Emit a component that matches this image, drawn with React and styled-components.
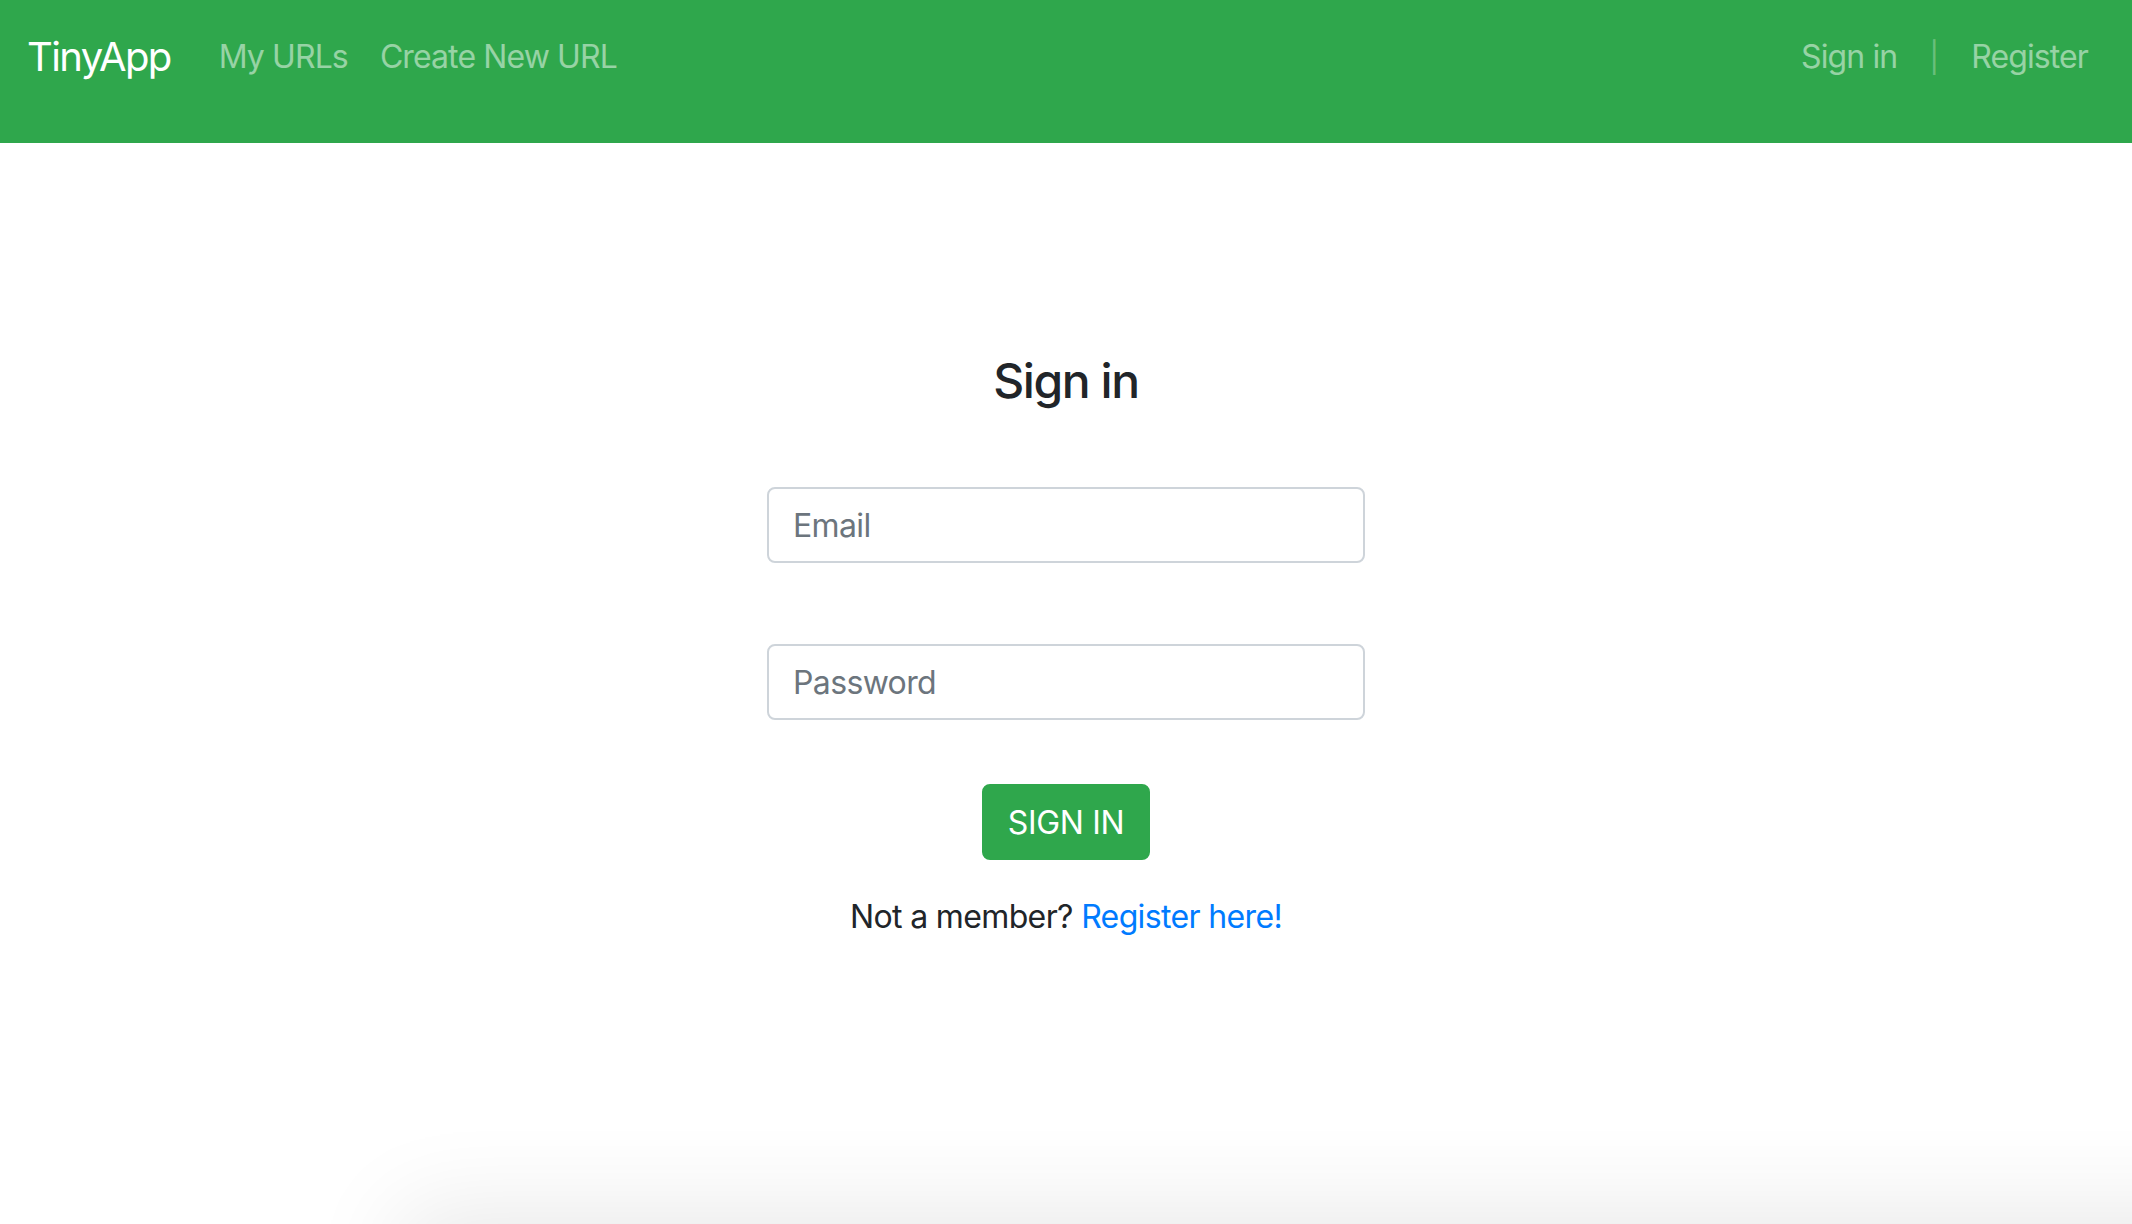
import React from "react";
import styled, { createGlobalStyle } from "styled-components";

const GlobalStyle = createGlobalStyle`
  html, body {
    margin: 0;
    padding: 0;
    background: #ffffff;
    font-family: Inter, "Noto Sans", "Liberation Sans", sans-serif;
    color: #212529;
    overflow: hidden;
  }
  * {
    box-sizing: border-box;
  }
`;

const App = () => {
  return (
    <>
      <GlobalStyle />
      <Page>
        <Navbar>
          <Brand href="#">TinyApp</Brand>
          <NavList>
            <NavLink href="#">My URLs</NavLink>
            <NavLink href="#">Create New URL</NavLink>
          </NavList>
          <NavList $right>
            <NavLink href="#">Sign in</NavLink>
            <Divider>|</Divider>
            <NavLink href="#">Register</NavLink>
          </NavList>
        </Navbar>
        <Main>
          <Heading>Sign in</Heading>
          <Form onSubmit={(e) => e.preventDefault()}>
            <Input type="email" placeholder="Email" />
            <Input type="password" placeholder="Password" $gap={81} />
            <Button type="submit">SIGN IN</Button>
          </Form>
          <Note>
            Not a member? <TextLink href="#">Register here!</TextLink>
          </Note>
        </Main>
        <BottomShade />
      </Page>
    </>
  );
};

export default App;

const Page = styled.div`
  min-height: 1224px;
  display: flex;
  flex-direction: column;
`;

const Navbar = styled.nav`
  height: 143px;
  background-color: #2fa74c;
  display: flex;
  align-items: flex-start;
  padding: 27px 28px 0 27px;
`;

const Brand = styled.a`
  color: #ffffff;
  font-size: 40px;
  line-height: 60px;
  letter-spacing: -0.04em;
  text-decoration: none;
  margin-right: 32px;
  white-space: nowrap;
`;

const NavList = styled.div`
  display: flex;
  align-items: center;
  height: 60px;
  margin-left: ${(p) => (p.$right ? "auto" : "0")};
`;

const NavLink = styled.a`
  color: rgba(255, 255, 255, 0.5);
  font-size: 32px;
  line-height: 48px;
  letter-spacing: -0.028em;
  padding: 0 16px;
  text-decoration: none;
  white-space: nowrap;
`;

const Divider = styled.span`
  color: rgba(255, 255, 255, 0.28);
  font-size: 30px;
  line-height: 48px;
  padding: 0 16px;
`;

const Main = styled.main`
  display: flex;
  flex-direction: column;
  align-items: center;
  padding-top: 209px;
`;

const Heading = styled.h3`
  margin: 0;
  font-size: 48px;
  font-weight: 500;
  line-height: 58px;
  letter-spacing: -0.03em;
  color: #212529;
`;

const Form = styled.form`
  width: 598px;
  display: flex;
  flex-direction: column;
  align-items: center;
  margin-top: 77px;
`;

const Input = styled.input`
  width: 100%;
  height: 76px;
  margin-top: ${(p) => p.$gap || 0}px;
  padding: 0 24px;
  font-family: inherit;
  font-size: 32px;
  letter-spacing: -0.02em;
  color: #495057;
  background: #ffffff;
  border: 2px solid #ced4da;
  border-radius: 8px;
  outline: none;

  &::placeholder {
    color: #6c757d;
  }
`;

const Button = styled.button`
  margin-top: 64px;
  height: 76px;
  padding: 0 24px;
  font-family: inherit;
  font-size: 32px;
  letter-spacing: -0.01em;
  color: #ffffff;
  background-color: #2fa74c;
  border: 2px solid #2fa74c;
  border-radius: 8px;
  cursor: pointer;
`;

const Note = styled.p`
  margin: 33px 0 0;
  font-size: 32px;
  line-height: 48px;
  letter-spacing: -0.02em;
  color: #212529;
`;

const TextLink = styled.a`
  color: #007bff;
  text-decoration: none;
`;

const BottomShade = styled.div`
  position: fixed;
  left: 430px;
  right: -200px;
  top: 1240px;
  height: 300px;
  background: #e8e8e8;
  box-shadow: 0 0 90px 30px rgba(0, 0, 0, 0.09);
  pointer-events: none;
`;
